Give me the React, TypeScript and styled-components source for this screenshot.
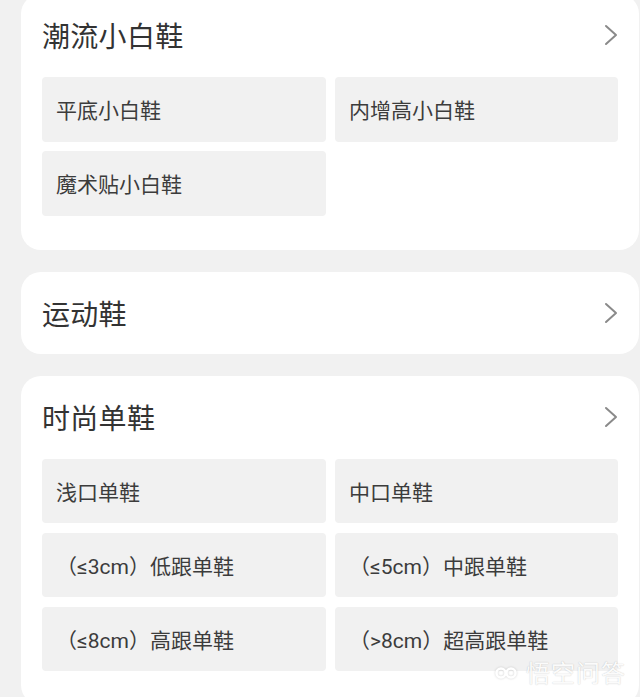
import React from "react";
import styled, { createGlobalStyle } from "styled-components";

const GlobalStyle = createGlobalStyle`
  html, body {
    margin: 0;
    padding: 0;
    background: #f1f1f1;
    overflow: hidden;
  }
  body {
    font-family: Roboto, "Noto Sans CJK SC", "Noto Sans", sans-serif;
  }
`;

const Page = styled.div`
  position: relative;
  width: 640px;
  height: 697px;
  overflow: hidden;
  background: #f1f1f1;
  box-sizing: border-box;
  padding: 0 1px 0 21px;
  display: flex;
  flex-direction: column;
  gap: 22px;
`;

const Card = styled.section<{ $first?: boolean; $collapsed?: boolean }>`
  background: #ffffff;
  border-radius: 20px;
  margin-top: ${(p) => (p.$first ? "-6px" : "0")};
  padding-bottom: ${(p) => (p.$collapsed ? "0" : "34px")};
  flex-shrink: 0;
`;

const Header = styled.div`
  height: 82px;
  display: flex;
  align-items: center;
  justify-content: space-between;
  padding: 0 21px;
`;

const Title = styled.h2`
  margin: 0;
  font-family: "Noto Sans CJK SC", sans-serif;
  font-size: 28px;
  font-weight: 400;
  color: #333333;
  letter-spacing: 0.3px;
`;

const Chevron = styled.svg`
  width: 14px;
  height: 22px;
  display: block;
`;

const Grid = styled.div`
  display: grid;
  grid-template-columns: 284px 283px;
  column-gap: 9px;
  row-gap: 9.5px;
  padding: 0 21px;
  margin-top: 1px;
`;

const Item = styled.div`
  height: 64.5px;
  background: #f1f1f1;
  border-radius: 4px;
  display: flex;
  align-items: center;
  padding-left: 14px;
  font-size: 21px;
  color: #3c3c3c;
  white-space: nowrap;
`;

const Watermark = styled.div`
  position: absolute;
  right: 14px;
  bottom: 8px;
  display: flex;
  align-items: center;
  gap: 8px;
  font-family: "Noto Sans CJK SC", sans-serif;
  font-size: 24px;
  color: rgba(255, 255, 255, 0.95);
  text-shadow: 0 0 1px rgba(0, 0, 0, 0.18), 0 0 2px rgba(0, 0, 0, 0.08);
  letter-spacing: 1px;
`;

const ArrowIcon = () => (
  <Chevron viewBox="0 0 14 22">
    <path d="M2 2 L12 11 L2 20" fill="none" stroke="#8a8a8a" strokeWidth="2" strokeLinecap="round" strokeLinejoin="round" />
  </Chevron>
);

const LogoIcon = () => (
  <svg width="24" height="14" viewBox="0 0 24 14" style={{ filter: "drop-shadow(0 0 1px rgba(0,0,0,0.18))" }}>
    <circle cx="7" cy="8" r="4.5" fill="none" stroke="#fff" strokeWidth="2.5" />
    <circle cx="17" cy="8" r="4.5" fill="none" stroke="#fff" strokeWidth="2.5" />
  </svg>
);

type Section = { title: string; items: string[] };

const sections: Section[] = [
  { title: "潮流小白鞋", items: ["平底小白鞋", "内增高小白鞋", "魔术贴小白鞋"] },
  { title: "运动鞋", items: [] },
  {
    title: "时尚单鞋",
    items: [
      "浅口单鞋",
      "中口单鞋",
      "（≤3cm）低跟单鞋",
      "（≤5cm）中跟单鞋",
      "（≤8cm）高跟单鞋",
      "（>8cm）超高跟单鞋",
    ],
  },
];

export default function App() {
  return (
    <>
      <GlobalStyle />
      <Page>
        {sections.map((s, i) => (
          <Card key={s.title} $first={i === 0} $collapsed={s.items.length === 0}>
            <Header>
              <Title>{s.title}</Title>
              <ArrowIcon />
            </Header>
            {s.items.length > 0 && (
              <Grid>
                {s.items.map((it) => (
                  <Item key={it}>{it}</Item>
                ))}
              </Grid>
            )}
          </Card>
        ))}
        <Watermark>
          <LogoIcon />
          <span>悟空问答</span>
        </Watermark>
      </Page>
    </>
  );
}
